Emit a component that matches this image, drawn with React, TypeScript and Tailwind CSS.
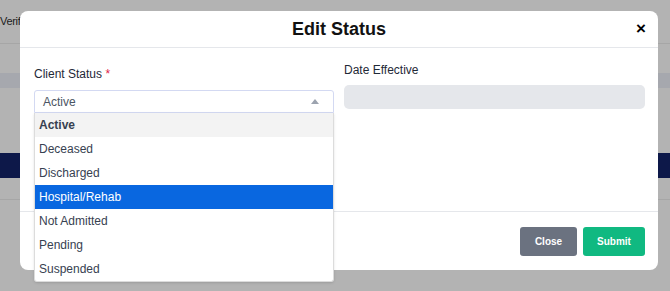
import React from "react";

const statuses = ["Active", "Deceased", "Discharged", "Hospital/Rehab", "Not Admitted", "Pending", "Suspended"];

const App = () => {
  const selected = "Active";
  const hovered = "Hospital/Rehab";

  return (
    <div className="relative w-[670px] h-[291px] overflow-hidden bg-[#b3b3b3] font-['Liberation_Sans',Arial,sans-serif]">
      {/* page behind the overlay */}
      <div className="flex flex-col">
        <div className="h-[44px] flex items-center border-b border-[#a6a6a6]">
          <span className="text-[11px] tracking-[-0.3px] text-[#1c1c1c]">Verif</span>
        </div>
        <div className="h-[29px]" />
        <div className="h-[15px] bg-[#a6a8ae]" />
        <div className="h-[65px]" />
        <div className="h-[25px] bg-[#0d1849]" />
        <div className="h-[22px] border-b border-[#a6a6a6]" />
      </div>

      {/* modal */}
      <div className="absolute left-[20px] top-[11px] w-[638px] h-[259px] bg-white rounded-[8px] flex flex-col">
        <div className="h-[37px] flex items-center justify-center relative border-b border-[#e5e7eb]">
          <h2 className="text-[18px] font-bold text-[#111]">Edit Status</h2>
          <button className="absolute right-[12px] top-[9px] text-[17px] font-bold leading-none text-black">×</button>
        </div>

        <div className="h-[163px] flex gap-[10px] pl-[14px] pr-[13px]">
          <div className="w-[300px] pt-[19px] relative">
            <label className="block text-[12px] leading-[14px] text-[#1f2937]">
              Client Status <span className="text-[#e11d48]">*</span>
            </label>
            <div className="mt-[9px] h-[23px] border border-[#d3d9f2] rounded-t-[3px] flex items-center justify-between pl-[8px] pr-[14px]">
              <span className="text-[12px] text-[#4b5563]">{selected}</span>
              <svg width="8" height="5" viewBox="0 0 8 5">
                <path d="M0 5 L4 0 L8 5 Z" fill="#9ca3af" />
              </svg>
            </div>
            <ul className="absolute left-0 top-[65px] w-[300px] bg-white border border-[#dcdcdc] border-t-0 rounded-b-[3px] shadow-sm z-10">
              {statuses.map((s) => (
                <li
                  key={s}
                  className={
                    s === hovered
                      ? "h-[24px] flex items-center px-[4px] text-[12px] bg-[#0967e0] text-white"
                      : s === selected
                      ? "h-[24px] flex items-center px-[4px] text-[12px] font-bold bg-[#f3f3f3] text-[#374151]"
                      : "h-[24px] flex items-center px-[4px] text-[12px] text-[#374151]"
                  }
                >
                  {s}
                </li>
              ))}
            </ul>
          </div>
          <div className="flex-1 pt-[15px]">
            <label className="block text-[12px] leading-[14px] text-[#1f2937]">Date Effective</label>
            <div className="mt-[8px] h-[24px] bg-[#e5e7eb] rounded-[5px]" />
          </div>
        </div>

        <div className="flex-1 border-t border-[#e5e7eb] flex items-center justify-end gap-[6px] pr-[13px]">
          <button className="w-[57px] h-[29px] bg-[#6b7280] rounded-[3px] text-white text-[10px] font-bold">Close</button>
          <button className="w-[62px] h-[29px] bg-[#10b981] rounded-[3px] text-white text-[10px] font-bold">Submit</button>
        </div>
      </div>
    </div>
  );
};

export default App;
